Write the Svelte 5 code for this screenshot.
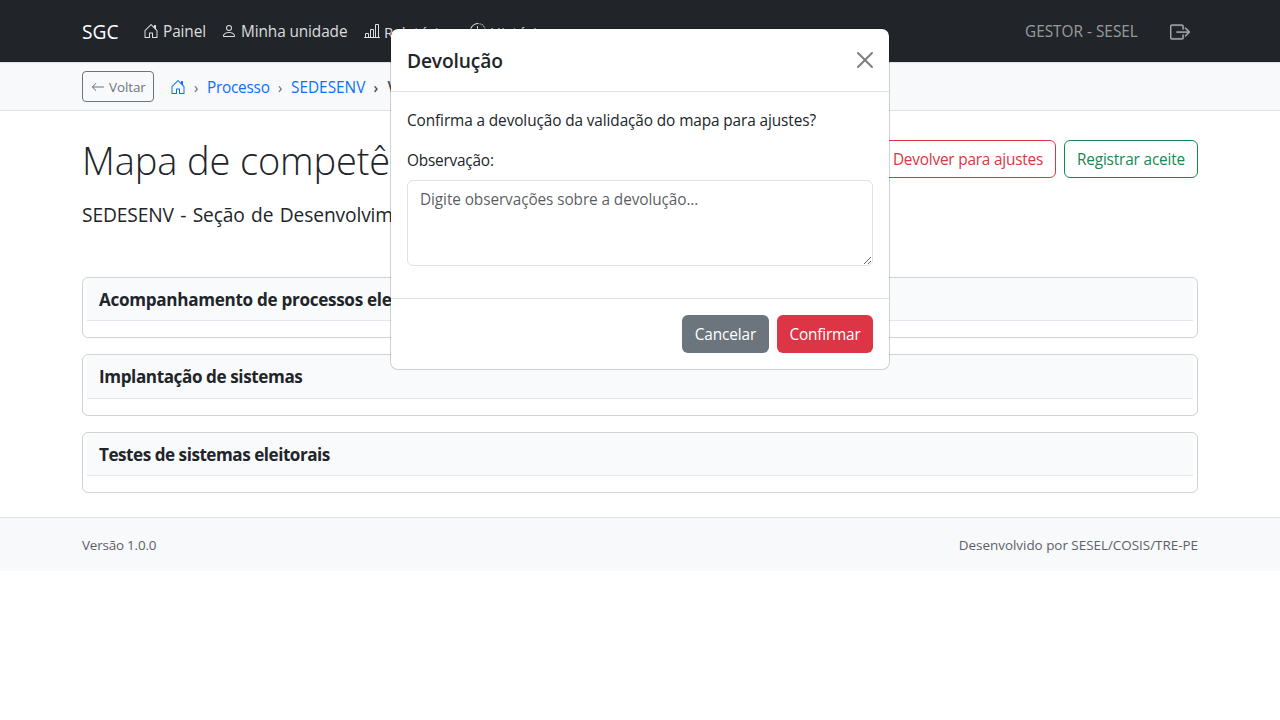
<script>
  const icons = {
    house: [
      'M8.354 1.146a.5.5 0 0 0-.708 0l-6 6A.5.5 0 0 0 1.5 7.5v7a.5.5 0 0 0 .5.5h4.5a.5.5 0 0 0 .5-.5v-4h2v4a.5.5 0 0 0 .5.5H14a.5.5 0 0 0 .5-.5v-7a.5.5 0 0 0-.146-.354L13 5.793V2.5a.5.5 0 0 0-.5-.5h-1a.5.5 0 0 0-.5.5v1.293zM2.5 14V7.707l5.5-5.5 5.5 5.5V14H10v-4a.5.5 0 0 0-.5-.5h-3a.5.5 0 0 0-.5.5v4z'
    ],
    person: [
      'M8 8a3 3 0 1 0 0-6 3 3 0 0 0 0 6m2-3a2 2 0 1 1-4 0 2 2 0 0 1 4 0m4 8c0 1-1 1-1 1H3s-1 0-1-1 1-4 6-4 6 3 6 4m-1-.004c-.001-.246-.154-.986-.832-1.664C11.516 10.68 10.289 10 8 10s-3.516.68-4.168 1.332c-.678.678-.83 1.418-.832 1.664z'
    ],
    chart: [
      'M11 2a1 1 0 0 1 1-1h2a1 1 0 0 1 1 1v12h.5a.5.5 0 0 1 0 1H.5a.5.5 0 0 1 0-1H1v-3a1 1 0 0 1 1-1h2a1 1 0 0 1 1 1v3h1V7a1 1 0 0 1 1-1h2a1 1 0 0 1 1 1v7h1zm1 12h2V2h-2zm-3 0V7H7v7zm-5 0v-3H2v3z'
    ],
    clock: [
      'M8.515 1.019A7 7 0 0 0 8 1V0a8 8 0 0 1 .589.022zm2.004.45a7 7 0 0 0-.985-.299l.219-.976q.576.129 1.126.342zm1.37.71a7 7 0 0 0-.439-.27l.493-.87a8 8 0 0 1 .979.654l-.615.789a7 7 0 0 0-.418-.302zm1.834 1.79a7 7 0 0 0-.653-.796l.724-.69q.406.429.747.91zm.744 1.352a7 7 0 0 0-.214-.468l.893-.45a8 8 0 0 1 .45 1.088l-.95.313a7 7 0 0 0-.179-.483m.53 2.507a7 7 0 0 0-.1-1.025l.985-.17q.1.58.116 1.17zm-.131 1.538q.05-.254.081-.51l.993.123a8 8 0 0 1-.23 1.155l-.964-.267q.069-.247.12-.501m-.952 2.379q.276-.436.486-.908l.914.405q-.24.54-.555 1.038zm-.964 1.205q.183-.183.35-.378l.758.653a8 8 0 0 1-.401.432z',
      'M8 1a7 7 0 1 0 4.95 11.95l.707.707A8.001 8.001 0 1 1 8 0z',
      'M7.5 3a.5.5 0 0 1 .5.5v5.21l3.248 1.856a.5.5 0 0 1-.496.868l-3.5-2A.5.5 0 0 1 7 9V3.5a.5.5 0 0 1 .5-.5'
    ],
    logout: [
      'M10 12.5a.5.5 0 0 1-.5.5h-8a.5.5 0 0 1-.5-.5v-9a.5.5 0 0 1 .5-.5h8a.5.5 0 0 1 .5.5v2a.5.5 0 0 0 1 0v-2A1.5 1.5 0 0 0 9.5 2h-8A1.5 1.5 0 0 0 0 3.5v9A1.5 1.5 0 0 0 1.5 14h8a1.5 1.5 0 0 0 1.5-1.5v-2a.5.5 0 0 0-1 0z',
      'M15.854 8.354a.5.5 0 0 0 0-.708l-3-3a.5.5 0 0 0-.708.708L14.293 7.5H5.5a.5.5 0 0 0 0 1h8.793l-2.147 2.146a.5.5 0 0 0 .708.708z'
    ],
    arrow: [
      'M15 8a.5.5 0 0 0-.5-.5H2.707l3.147-3.146a.5.5 0 1 0-.708-.708l-4 4a.5.5 0 0 0 0 .708l4 4a.5.5 0 0 0 .708-.708L2.707 8.5H14.5A.5.5 0 0 0 15 8'
    ],
    close: [
      'M.293.293a1 1 0 0 1 1.414 0L8 6.586 14.293.293a1 1 0 1 1 1.414 1.414L9.414 8l6.293 6.293a1 1 0 0 1-1.414 1.414L8 9.414l-6.293 6.293a1 1 0 0 1-1.414-1.414L6.586 8 .293 1.707a1 1 0 0 1 0-1.414'
    ]
  };

  const nav = [
    { icon: 'house', label: 'Painel', width: 42 },
    { icon: 'person', label: 'Minha unidade', width: 107 },
    { icon: 'chart', label: 'Relatórios', width: 70 },
    { icon: 'clock', label: 'Histórico', width: 62 }
  ];

  const competencias = [
    { nome: 'Acompanhamento de processos eleitorais', ls: -0.3 },
    { nome: 'Implantação de sistemas', ls: -0.4 },
    { nome: 'Testes de sistemas eleitorais', ls: -0.47 }
  ];
</script>

{#snippet icon(name, size)}
  <svg class={name} width={size} height={size} viewBox="0 0 16 16" fill="currentColor" aria-hidden="true">
    {#each icons[name] as d}<path {d} />{/each}
  </svg>
{/snippet}

<nav class="navbar">
  <div class="container">
    <span class="brand">SGC</span>
    <ul class="links">
      {#each nav as item}
        <li>
          {@render icon(item.icon, 16)}
          <span class="label" style:width="{item.width}px">{item.label}</span>
        </li>
      {/each}
    </ul>
    <div class="session">
      <span class="profile">GESTOR - SESEL</span>
      {@render icon('logout', 20)}
    </div>
  </div>
</nav>

<div class="trail">
  <div class="container">
    <button class="btn back">{@render icon('arrow', 14)}<span>Voltar</span></button>
    <ol class="crumbs">
      <li class="home">{@render icon('house', 16)}</li>
      <li class="sep">›</li>
      <li class="link processo">Processo</li>
      <li class="sep">›</li>
      <li class="link sigla">SEDESENV</li>
      <li class="sep strong">›</li>
      <li class="current">Visualização de mapa</li>
    </ol>
  </div>
</div>

<main class="container">
  <header class="heading">
    <h1>Mapa de competências</h1>
    <div class="actions">
      <button class="btn danger-outline">Devolver para ajustes</button>
      <button class="btn success-outline">Registrar aceite</button>
    </div>
  </header>
  <p class="unit">SEDESENV - Seção de Desenvolvimento de Sistemas</p>
  {#each competencias as c}
    <section class="card">
      <h2 style:letter-spacing="{c.ls}px">{c.nome}</h2>
    </section>
  {/each}
</main>

<footer class="footer">
  <div class="container">
    <span class="version">Versão 1.0.0</span>
    <span class="credit">Desenvolvido por SESEL/COSIS/TRE-PE</span>
  </div>
</footer>

<div class="overlay">
  <div class="modal" role="dialog" aria-modal="true">
    <div class="modal-header">
      <h5>Devolução</h5>
      <button class="close-btn" aria-label="Fechar">{@render icon('close', 16)}</button>
    </div>
    <div class="modal-body">
      <p>Confirma a devolução da validação do mapa para ajustes?</p>
      <label for="obs">Observação:</label>
      <textarea id="obs" rows="3" placeholder="Digite observações sobre a devolução..."></textarea>
    </div>
    <div class="modal-footer">
      <button class="btn secondary">Cancelar</button>
      <button class="btn danger">Confirmar</button>
    </div>
  </div>
</div>

<style>
  :global(body) {
    background: #fff;
    color: #212529;
    font: 15.36px/24px "Open Sans", "Noto Sans", sans-serif;
    overflow: hidden;
  }
  :global(*) { box-sizing: border-box; }
  h1, h2, h5, p, ul, ol { margin: 0; padding: 0; }
  ul, ol { list-style: none; }
  svg { display: block; flex: none; }
  button, textarea { font: inherit; color: inherit; margin: 0; }

  .container {
    width: 1140px;
    margin: 0 auto;
    padding: 0 12px;
  }
  .navbar { background: #212529; height: 62px; }
  .navbar .container { display: flex; align-items: center; height: 62px; }
  .brand { color: #fff; font-size: 19.2px; line-height: 30px; width: 37px; margin-right: 16px; padding-top: 1px; }
  .links { display: flex; color: rgba(255, 255, 255, 0.85); }
  .links li { display: flex; align-items: center; gap: 4px; padding: 8px; }
  .label { white-space: nowrap; letter-spacing: -0.1px; padding-top: 2px; }
  .links li:nth-child(n + 3) .label { font-size: 15px; letter-spacing: 0.08px; }
  .session { margin-left: auto; display: flex; align-items: center; color: rgba(255, 255, 255, 0.55); padding-right: 8px; }
  .profile { width: 113px; white-space: nowrap; margin-right: 32px; padding-top: 2px; }
  .logout { stroke: currentColor; stroke-width: 0.3; margin-top: 2px; }

  .trail { background: #f8f9fb; border: solid #dee2e6; border-width: 1px 0; padding: 8px 0; }
  .trail .container { display: flex; align-items: center; }
  .crumbs { display: flex; align-items: center; margin-left: 16px; white-space: nowrap; height: 31px; }
  .crumbs li { padding-top: 2px; }
  .crumbs .home { color: #0d6efd; padding-top: 0; }
  .crumbs .sep { width: 21px; padding-left: 8px; color: #5d6266; font-size: 14px; }
  .crumbs .strong { font-weight: 600; color: #43484c; padding-left: 7px; }
  .link { color: #0d6efd; }
  .processo { width: 63px; letter-spacing: -0.25px; }
  .sigla { width: 75.5px; letter-spacing: 0; }
  .current { font-weight: 600; color: #495057; }

  .btn {
    border: 1px solid transparent;
    border-radius: 6px;
    background: transparent;
    height: 38px;
    padding: 2px 0 0;
    line-height: 24px;
    text-align: center;
    white-space: nowrap;
  }
  .back {
    display: flex;
    align-items: center;
    gap: 4px;
    width: 72px;
    height: 31px;
    padding: 0 8px;
    font-size: 13.44px;
    line-height: 21px;
    border-radius: 4px;
    border-color: #6c757d;
    color: #6c757d;
  }
  .back span { padding-top: 2px; letter-spacing: -0.1px; }
  .danger-outline { width: 176px; border-color: #dc3545; color: #dc3545; letter-spacing: -0.2px; }
  .success-outline { width: 134px; border-color: #198754; color: #198754; letter-spacing: -0.16px; }
  .secondary { width: 87px; background: #6c757d; color: #fff; letter-spacing: -0.1px; }
  .danger { width: 96px; background: #dc3545; color: #fff; letter-spacing: -0.19px; }

  main.container { padding-top: 26px; padding-bottom: 24px; }
  .heading { display: flex; justify-content: space-between; height: 64px; }
  h1 { font-size: 38px; font-weight: 300; line-height: 46px; white-space: nowrap; letter-spacing: -0.12px; }
  .actions { display: flex; gap: 8px; padding-top: 3px; }
  .unit { font-size: 19.2px; line-height: 28px; height: 60px; margin-bottom: 16px; word-spacing: 1.5px; letter-spacing: -0.12px; }

  .card {
    border: 1px solid rgba(0, 0, 0, 0.175);
    border-radius: 6px;
    padding: 0 4px 16px;
    height: 61.4px;
  }
  .card + .card { margin-top: 16px; }
  .card h2 {
    height: 43.4px;
    padding: 8.8px 12px 8px;
    background: #f9fafc;
    border-bottom: 1px solid #e1e5ec;
    border-radius: 5px 5px 0 0;
    font-size: 17.1px;
    line-height: 26px;
    font-weight: 700;
  }
  .card:last-child h2 { padding-top: 9.2px; }

  .footer { background: #f8f9fb; border-top: 1px solid #dee2e6; height: 53.6px; }
  .footer .container { display: flex; justify-content: space-between; align-items: center; height: 53px; padding-top: 2px; font-size: 13.44px; line-height: 21px; color: #5c6166; }
  .version { letter-spacing: -0.2px; }
  .credit { letter-spacing: -0.02px; }

  .overlay { position: absolute; inset: 0; padding-top: 28px; }
  .modal {
    width: 500px;
    margin: 0 auto;
    border: 1px solid rgba(0, 0, 0, 0.175);
    border-radius: 8px;
    background: #fff;
    background-clip: padding-box;
  }
  .modal-header { display: flex; align-items: center; justify-content: space-between; padding: 16px; height: 63px; border-bottom: 1px solid #dee2e6; }
  h5 { font-size: 19.2px; font-weight: 600; line-height: 30px; letter-spacing: -0.13px; padding-top: 2px; }
  .close-btn { border: 0; background: none; padding: 0; color: #000; opacity: 0.5; }
  .modal-body { padding: 17px 16px 16px; height: 206px; }
  .modal-body p { margin-bottom: 16px; letter-spacing: -0.1px; white-space: nowrap; }
  label { display: block; margin-bottom: 7px; letter-spacing: -0.2px; }
  textarea {
    display: block;
    width: 100%;
    height: 86px;
    padding: 7px 12px 5px;
    border: 1px solid #dee2e6;
    border-radius: 6px;
    background: #fff;
    resize: vertical;
    letter-spacing: -0.09px;
  }
  textarea::placeholder { color: rgba(33, 37, 41, 0.75); opacity: 1; }
  .modal-footer { display: flex; justify-content: flex-end; gap: 8px; padding: 16px; border-top: 1px solid #dee2e6; }
</style>
